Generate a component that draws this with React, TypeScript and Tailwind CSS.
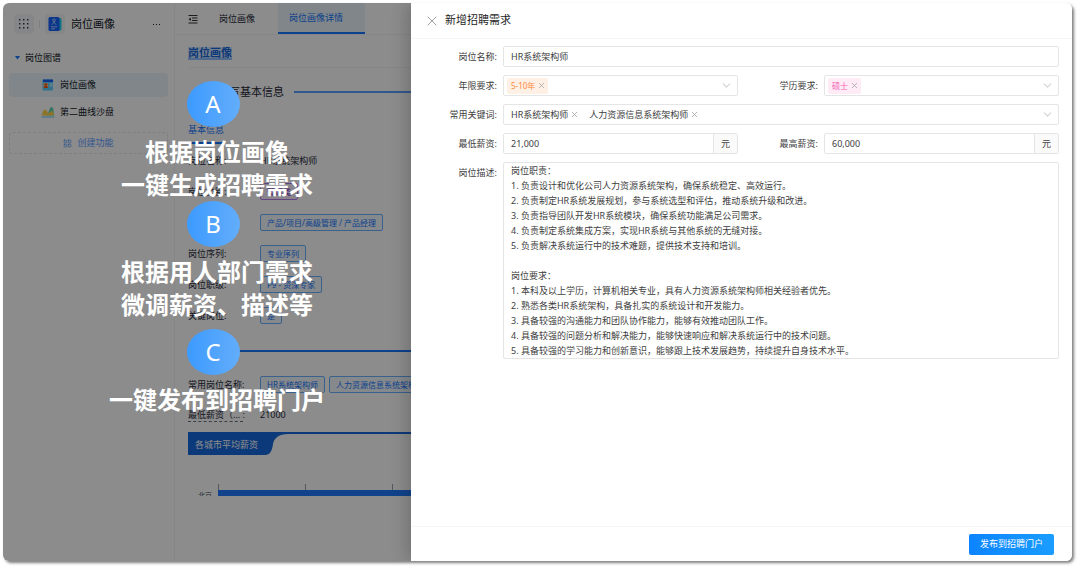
import {ReactNode, useState} from "react";
import {ChevronDown, LayoutGrid, X} from "lucide-react";

const JOB_DESCRIPTION = `岗位职责：
1. 负责设计和优化公司人力资源系统架构，确保系统稳定、高效运行。
2. 负责制定HR系统发展规划，参与系统选型和评估，推动系统升级和改进。
3. 负责指导团队开发HR系统模块，确保系统功能满足公司需求。
4. 负责制定系统集成方案，实现HR系统与其他系统的无缝对接。
5. 负责解决系统运行中的技术难题，提供技术支持和培训。

岗位要求：
1. 本科及以上学历，计算机相关专业，具有人力资源系统架构师相关经验者优先。
2. 熟悉各类HR系统架构，具备扎实的系统设计和开发能力。
3. 具备较强的沟通能力和团队协作能力，能够有效推动团队工作。
4. 具备较强的问题分析和解决能力，能够快速响应和解决系统运行中的技术问题。
5. 具备较强的学习能力和创新意识，能够跟上技术发展趋势，持续提升自身技术水平。`;

function GridDots() {
  return (
    <svg width="12" height="12" viewBox="0 0 12 12" fill="#222a3a">
      {[1, 5, 9].map(y => [1, 5, 9].map(x => (
        <rect key={`${x}-${y}`} x={x} y={y} width="1.5" height="1.5" rx="0.5"/>
      )))}
    </svg>
  );
}

function ProfileBook() {
  return (
    <svg width="14" height="16" viewBox="0 0 14 16">
      <rect x="3" y="2" width="10.500" height="12.500" rx="1.500" fill="#22d3ee"/>
      <rect x="0.500" y="1" width="11" height="14" rx="1.500" fill="#1463ff"/>
      <circle cx="6" cy="4.300" r="1.300" fill="none" stroke="#dbe8ff" strokeWidth="0.800"/>
      <path d="M3.800 8.800L6 6.200l2.200 2.600" fill="none" stroke="#dbe8ff" strokeWidth="0.800"/>
      <path d="M3 10.800h6M3 12.800h4" stroke="#dbe8ff" strokeWidth="0.800"/>
    </svg>
  );
}

function ProfileCard() {
  return (
    <svg width="12" height="12" viewBox="0 0 12 12">
      <rect x="0.500" y="0.500" width="10.500" height="11" rx="1" fill="#5bd0ff"/>
      <rect x="1" y="0.500" width="10" height="2.500" fill="#1463ff"/>
      <rect x="1.500" y="4" width="4.500" height="5" fill="#ffb27a"/>
      <circle cx="3.800" cy="5.500" r="1.100" fill="#c2410c"/>
      <path d="M1.800 9c.2-1.600 1-2.200 2-2.200s1.800.6 2 2.200z" fill="#ea580c"/>
      <path d="M7.500 5h3M7.500 7h3" stroke="#fff" strokeWidth="0.900"/>
    </svg>
  );
}

function CurveIcon() {
  return (
    <svg width="14" height="12" viewBox="0 0 14 12">
      <path d="M5 9.500C8 9 8 1 10.500 1S12.500 7 13 9.500z" fill="#5fd6b0"/>
      <path d="M.5 9.500C1.500 8 2 3.500 4 3.500S6 7 7.500 7s2-2 3.300-2S12.500 8 13 9.500z" fill="#ffd24a"/>
      <path d="M.5 11h13" stroke="#5fc8ff" strokeWidth="1"/>
    </svg>
  );
}

function FoldIcon() {
  return (
    <svg width="10" height="10" viewBox="0 0 10 10" fill="none" stroke="#333" strokeWidth="1">
      <path d="M.5 1.500h9M4 4h5.500M4 6.500h5.500M.5 9h9"/>
      <path d="M2.800 3.500v3.500L.5 5.200z" fill="#333" stroke="none"/>
    </svg>
  );
}

function Sidebar() {
  return (
    <aside className="w-[172px] shrink-0 border-r border-gray-100 px-[6px] pt-[11px]">
      <div className="flex h-5 items-center pl-[5px] pr-[7px]">
        <button aria-label="应用" className="flex size-5 items-center justify-center rounded-sm bg-gray-100"><GridDots/></button>
        <span className="mx-[5px] h-2 w-px bg-gray-200"/>
        <span className="flex size-5 items-center justify-center rounded-sm bg-gray-100"><ProfileBook/></span>
        <h1 className="ml-[6px] flex-1 text-[11px] text-gray-900">岗位画像</h1>
        <button aria-label="更多" className="flex gap-[2px] p-px">
          <i className="size-px bg-gray-900"/>
          <i className="size-px bg-gray-900"/>
          <i className="size-px bg-gray-900"/>
        </button>
      </div>
      <nav className="mt-[14px] text-[9px] text-gray-900">
        <button className="flex h-5 items-center gap-[5px] pl-[6px]">
          <svg width="5" height="4" viewBox="0 0 5 4" fill="#1677ff"><path d="M0 0h5L2.500 3.500z"/></svg>
          岗位图谱
        </button>
        <a href="#profile" className="mt-[5px] flex h-6 items-center gap-[5px] rounded-sm bg-[#e9f4fa] pl-8">
          <span className="flex w-[14px] justify-center"><ProfileCard/></span>岗位画像
        </a>
        <a href="#sandbox" className="mt-[3px] flex h-6 items-center gap-[5px] pl-8">
          <CurveIcon/>第二曲线沙盘
        </a>
        <button className="mt-2 flex h-[22px] w-full items-center justify-center gap-[5px] rounded-sm border border-dashed border-gray-200 text-[#5c9dff]">
          <LayoutGrid size={9}/>创建功能
        </button>
      </nav>
    </aside>
  );
}

function Tag({children, purple}: {children: ReactNode; purple?: boolean}) {
  const color = purple ? "border-[#b37feb] bg-[#f9f0ff] text-[#722ed1]" : "border-[#69b1ff] bg-[#f3f9ff] text-[#1677ff]";
  return <span className={`h-[17px] shrink-0 rounded-xs border px-[6px] text-[8px] leading-[15px] ${color}`}>{children}</span>;
}

function DetailRow({label, children}: {label: string; children: ReactNode}) {
  return (
    <div className="flex h-[31px] items-center whitespace-nowrap">
      <dt className="w-[72px] shrink-0">{label}</dt>
      <dd className="flex gap-1">{children}</dd>
    </div>
  );
}

function DetailPage() {
  return (
    <div className="min-w-0 flex-1 overflow-hidden text-[9px] text-gray-800">
      <div className="flex h-8 items-stretch border-b border-gray-100 pl-[13px]">
        <button aria-label="收起菜单" className="mr-[10px]"><FoldIcon/></button>
        <button className="px-[11px]">岗位画像</button>
        <button className="ml-3 border-b-2 border-[#1677ff] bg-[#e9f4fa] pr-[22px] pl-[11px] text-[#1677ff]">岗位画像详情</button>
      </div>
      <div className="pl-[13px]">
        <div className="flex h-[33px] items-center border-b border-gray-100 pt-1">
          <h2 className="border-b-2 border-[#8fbfff] bg-[#d6e8ff] text-[11px] leading-[11px] font-bold text-[#1668dc]">岗位画像</h2>
        </div>
        <div className="mt-3 flex h-6 items-center">
          <span className="ml-2 size-[18px] shrink-0 rounded-full border border-gray-500"/>
          <span className="ml-1 shrink-0 text-[11px]">填写基本信息</span>
          <span className="ml-[10px] h-[2px] flex-1 bg-[#5a9eff]"/>
        </div>
        <h3 className="mt-[18px] flex">
          <span className="border-b-2 border-[#1677ff] pb-1 leading-[16px] text-[#1677ff]">基本信息</span>
        </h3>
        <dl className="mt-px">
          <DetailRow label="岗位名称:">HR系统架构师</DetailRow>
          <DetailRow label="岗位类别:"><Tag purple>管理类</Tag></DetailRow>
          <DetailRow label=""><Tag>产品/项目/高级管理 / 产品经理</Tag></DetailRow>
          <DetailRow label="岗位序列:"><Tag>专业序列</Tag></DetailRow>
          <DetailRow label="岗位职级:"><Tag>P9 - 资深专家</Tag></DetailRow>
          <DetailRow label="关键岗位:"><Tag>是</Tag></DetailRow>
        </dl>
        <hr className="mt-[19px] mb-[17px] border-t-2 border-[#1677ff]"/>
        <dl>
          <DetailRow label="常用岗位名称:"><Tag>HR系统架构师</Tag><Tag>人力资源信息系统架构师</Tag></DetailRow>
          <div className="flex h-[30px] items-center whitespace-nowrap">
            <dt className="w-[72px] shrink-0"><span className="border-b border-dashed border-gray-500">最低薪资（... </span> :</dt>
            <dd>21000</dd>
          </div>
        </dl>
        <div className="mt-[2px] flex h-[23px] border-t-2 border-[#1668dc]">
          <h3 className="bg-[#1668dc] pr-2 pl-[7px] leading-[21px] text-white">各城市平均薪资</h3>
          <svg width="22" height="21" viewBox="0 0 22 21" fill="#1668dc"><path d="M0 0h22C13 0 8 4 7 10C6 17 4 21-1 21z"/></svg>
        </div>
        <div className="mt-[29px] flex h-[12px] items-end">
          <span className="flex h-1 w-[30px] shrink-0 items-start overflow-hidden pl-[10px] text-[7px] leading-[7px] text-gray-600">北京</span>
          <div className="flex-1">
            <div className="grid h-[6px] grid-cols-[87px_87px_87px]">
              <i className="border-l border-gray-400"/>
              <i className="border-l border-gray-400"/>
              <i className="border-l border-gray-400"/>
            </div>
            <div className="h-[6px] bg-[#1f7bff]"/>
          </div>
        </div>
      </div>
    </div>
  );
}

function Step({letter}: {letter: string}) {
  return (
    <span className="mr-2 flex h-[46px] w-[53px] items-center justify-center rounded-[50%] bg-linear-to-r from-[#3b9aff] to-[#62adfb] leading-[46px] font-normal">
      {letter}
    </span>
  );
}

const FIELD = "flex h-[21px] min-w-0 items-center rounded-xs border border-neutral-200 bg-white";
const LABEL = "pr-[6px] text-right leading-[21px]";

function Chip({children, className, onRemove}: {children: string; className: string; onRemove: () => void}) {
  return (
    <span className={`flex h-4 shrink-0 items-center gap-[2px] rounded-xs pl-1 ${className}`}>
      {children}
      <button type="button" aria-label={`移除${children}`} onClick={onRemove}><X size={9} strokeWidth={2} className="text-neutral-400"/></button>
    </span>
  );
}

interface TagSelectProps {
  id: string;
  initial: string[];
  chip: string;
  className?: string;
}

function TagSelect({id, initial, chip, className = ""}: TagSelectProps) {
  const [values, setValues] = useState<string[]>(initial);
  return (
    <div className={`${FIELD} pl-[3px] pr-1 ${className}`}>
      {values.map(value => (
        <Chip key={value} className={chip} onRemove={() => setValues(values.filter(v => v !== value))}>{value}</Chip>
      ))}
      <select
        id={id}
        value=""
        onChange={event => setValues([...values, event.target.value])}
        className="h-full min-w-0 flex-1 appearance-none bg-transparent outline-none"
      >
        <option value=""></option>
        {initial.filter(v => !values.includes(v)).map(v => <option key={v}>{v}</option>)}
      </select>
      <ChevronDown size={13} strokeWidth={2} className="shrink-0 text-neutral-300"/>
    </div>
  );
}

function SalaryInput({id, value}: {id: string; value: string}) {
  return (
    <div className={`${FIELD} overflow-hidden`}>
      <input id={id} defaultValue={value} className="h-full min-w-0 flex-1 px-[7px] outline-none"/>
      <span className="flex h-full w-6 items-center justify-center border-l border-neutral-200 bg-neutral-50">元</span>
    </div>
  );
}

function Drawer() {
  return (
    <section className="relative flex min-w-0 flex-1 flex-col bg-white text-[9px] text-neutral-700 shadow-[-4px_0_16px_rgba(0,0,0,0.2)]">
      <header className="flex h-9 shrink-0 items-center gap-[5px] border-b border-neutral-100 pl-[13px]">
        <button aria-label="关闭"><X size={16} strokeWidth={1.500} className="text-neutral-400"/></button>
        <h2 className="text-[11px] text-neutral-800">新增招聘需求</h2>
      </header>
      <form className="grid flex-1 grid-cols-[92px_1fr_86px_1fr] content-start gap-y-2 pt-[7px] pr-[13px]">
        <label htmlFor="name" className={LABEL}>岗位名称:</label>
        <input id="name" defaultValue="HR系统架构师" className={`${FIELD} col-span-3 px-[7px] outline-none`}/>

        <label htmlFor="years" className={LABEL}>年限要求:</label>
        <TagSelect id="years" initial={["5-10年"]} chip="bg-[#fff0e6] pr-[2px] text-[8px] text-[#ff8b3d]"/>
        <label htmlFor="degree" className={LABEL}>学历要求:</label>
        <TagSelect id="degree" initial={["硕士"]} chip="bg-[#ffebf6] pr-[2px] text-[8px] text-[#f35fb3]"/>

        <label htmlFor="keywords" className={LABEL}>常用关键词:</label>
        <TagSelect id="keywords" initial={["HR系统架构师", "人力资源信息系统架构师"]} chip="pr-[6px]" className="col-span-3"/>

        <label htmlFor="min" className={LABEL}>最低薪资:</label>
        <SalaryInput id="min" value="21,000"/>
        <label htmlFor="max" className={LABEL}>最高薪资:</label>
        <SalaryInput id="max" value="60,000"/>

        <label htmlFor="description" className={LABEL}>岗位描述:</label>
        <textarea
          id="description"
          rows={13}
          defaultValue={JOB_DESCRIPTION}
          className="col-span-3 block resize-none overflow-hidden rounded-xs border border-neutral-200 px-[7px] leading-[15px] outline-none"
        />
      </form>
      <footer className="flex h-[35px] shrink-0 items-center justify-end border-t border-neutral-100 pr-[18px]">
        <button className="h-[21px] rounded-xs bg-linear-to-r from-[#0d84ff] to-[#1a9dff] px-[11px] text-white">发布到招聘门户</button>
      </footer>
    </section>
  );
}

export default function App() {
  return (
    <div className="h-screen bg-white pt-[3px] pr-2 pb-2 pl-[3px] font-['Noto_Sans','Noto_Sans_CJK_SC',sans-serif]">
      <main className="flex h-full overflow-hidden rounded-md shadow-[2px_2px_3px_rgba(0,0,0,0.5)]">
        <div className="relative flex w-[408px] shrink-0 bg-white">
          <Sidebar/>
          <DetailPage/>
          <div className="absolute inset-0 bg-black/45"/>
          <div className="absolute top-[78px] left-[106px] flex w-[216px] flex-col items-center gap-2 text-center text-2xl leading-[33px] font-bold whitespace-nowrap text-white">
            <Step letter="A"/>
            <p>根据岗位画像<br/>一键生成招聘需求</p>
            <div className="-mt-2 flex flex-col items-center gap-2">
              <Step letter="B"/>
              <p>根据用人部门需求<br/>微调薪资、描述等</p>
            </div>
            <Step letter="C"/>
            <p>一键发布到招聘门户</p>
          </div>
        </div>
        <Drawer/>
      </main>
    </div>
  );
}
